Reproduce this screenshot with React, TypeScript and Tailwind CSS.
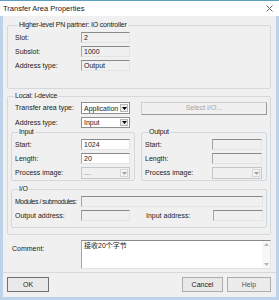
import React from 'react'

const fieldBase =
  'h-[11px] border border-t-[#8a8a8a] border-l-[#a5a5a5] border-r-[#e4e4e4] border-b-[#e4e4e4] pl-[2px] leading-[9px] whitespace-nowrap overflow-hidden'

function Field({ value, white, className = '' }: { value?: string; white?: boolean; className?: string }) {
  return <div className={`${fieldBase} ${white ? 'bg-white' : 'bg-[#f0f0f0]'} ${className}`}>{value}</div>
}

function Arrow({ dim }: { dim?: boolean }) {
  return (
    <svg width="5" height="3" viewBox="0 0 5 3">
      <path d="M0 0h5L2.5 3z" fill={dim ? '#a0a0a0' : '#000'} />
    </svg>
  )
}

function Combo({ value, disabled, className = '' }: { value?: string; disabled?: boolean; className?: string }) {
  return (
    <div
      className={`flex h-full border ${
        disabled ? 'border-[#c6c6c6] bg-[#f0f0f0] text-[#a0a0a0]' : 'border-[#8f8f8f] bg-white'
      } ${className}`}
    >
      <div className="flex-1 pl-[2px] leading-[9px] whitespace-nowrap overflow-hidden flex items-center">{value}</div>
      <div
        className={`w-[8px] m-[1px] flex items-center justify-center border ${
          disabled ? 'border-[#d6d6d6] bg-[#f4f4f4]' : 'border-[#b8b8b8] bg-[#ececec]'
        }`}
      >
        <Arrow dim={disabled} />
      </div>
    </div>
  )
}

function Group({ title, className = '', children }: { title: string; className?: string; children: React.ReactNode }) {
  return (
    <fieldset className={`border border-[#d2d8dc] rounded-[2px] ${className}`}>
      <legend className="ml-[3px] px-[1px] leading-[8px] whitespace-nowrap tracking-[-0.2px]">{title}</legend>
      {children}
    </fieldset>
  )
}

export default function App() {
  return (
    <div className="w-[279px] h-[300px] flex flex-col border-t border-t-[#5d9fc2] bg-white text-[7px] leading-[8px] text-[#222] whitespace-nowrap font-['Liberation_Sans',Arial,sans-serif] overflow-hidden">
      <div className="h-[15px] shrink-0 flex items-center justify-between pl-[3px] pr-[6px]">
        <span className="text-[7.5px] text-[#1a1a1a]">Transfer Area Properties</span>
        <svg width="7" height="7" viewBox="0 0 7 7">
          <path d="M0.5 0.5l6 6M6.5 0.5l-6 6" stroke="#666" strokeWidth="1" />
        </svg>
      </div>

      <div className="flex-1 flex flex-col bg-[#f0f0f0] border-x-[3px] border-b-[3px] border-[#bcd3ea] pl-[4px] pr-[5px]">
        <Group title="Higher-level PN partner: IO controller" className="mt-[5px] pt-[3px] pl-[7px] pb-[17px]">
          <div className="flex flex-col gap-[3px]">
            <div className="flex items-center h-[11px]">
              <span className="w-[66px]">Slot:</span>
              <Field value="2" className="w-[49px]" />
            </div>
            <div className="flex items-center h-[11px]">
              <span className="w-[66px]">Subslot:</span>
              <Field value="1000" className="w-[49px]" />
            </div>
            <div className="flex items-center h-[11px]">
              <span className="w-[66px]">Address type:</span>
              <Field value="Output" className="w-[49px]" />
            </div>
          </div>
        </Group>

        <Group title="Local: I-device" className="mt-[3px] pt-[2px] px-[3px] pb-[6px]">
          <div className="flex flex-col gap-[3px] pl-[4px]">
            <div className="flex items-center h-[12px]">
              <span className="w-[66px]">Transfer area type:</span>
              <Combo value="Application" className="w-[49px]" />
              <div className="ml-[11px] w-[126px] h-[13px] flex items-center justify-center border border-[#cfcfcf] border-r-[#9a9a9a] border-b-[#9a9a9a] text-[#a3a3a3]">
                Select I/O...
              </div>
            </div>
            <div className="flex items-center h-[11px]">
              <span className="w-[66px]">Address type:</span>
              <Combo value="Input" className="w-[49px]" />
            </div>
          </div>

          <div className="grid grid-cols-[124px_126px] gap-[6px]">
            <Group title="Input" className="pt-[3px] px-[3px] pb-[1px]">
              <div className="flex flex-col gap-[3px]">
                <div className="flex items-center h-[11px]">
                  <span className="w-[66px]">Start:</span>
                  <Field value="1024" white className="w-[49px]" />
                </div>
                <div className="flex items-center h-[11px]">
                  <span className="w-[66px]">Length:</span>
                  <Field value="20" white className="w-[49px]" />
                </div>
                <div className="flex items-center h-[12px]">
                  <span className="w-[66px]">Process image:</span>
                  <Combo value="---" disabled className="w-[49px]" />
                </div>
              </div>
            </Group>
            <Group title="Output" className="pt-[3px] px-[3px] pb-[1px]">
              <div className="flex flex-col gap-[3px]">
                <div className="flex items-center h-[11px]">
                  <span className="w-[67px]">Start:</span>
                  <Field className="w-[50px]" />
                </div>
                <div className="flex items-center h-[11px]">
                  <span className="w-[67px]">Length:</span>
                  <Field className="w-[50px]" />
                </div>
                <div className="flex items-center h-[12px]">
                  <span className="w-[67px]">Process image:</span>
                  <Combo disabled className="w-[50px]" />
                </div>
              </div>
            </Group>
          </div>

          <Group title="I/O" className="mt-[4px] pt-[3px] pl-[3px] pr-[3px] pb-[6px]">
            <div className="flex flex-col gap-[3px]">
              <div className="flex items-center h-[11px]">
                <span className="w-[66px] shrink-0 tracking-[-0.5px]">Modules / submodules:</span>
                <Field className="flex-1" />
              </div>
              <div className="flex items-center h-[11px]">
                <span className="w-[66px]">Output address:</span>
                <Field className="w-[49px]" />
                <span className="ml-[16px] w-[67px]">Input address:</span>
                <Field className="w-[50px]" />
              </div>
            </div>
          </Group>
        </Group>

        <div className="mt-[5px] flex">
          <span className="w-[74px] pl-[5px] pt-[5px]">Comment:</span>
          <div className="w-[190px] h-[29px] flex bg-white border border-t-[#8a8a8a] border-l-[#a5a5a5] border-r-[#e4e4e4] border-b-[#e4e4e4]">
            <div className="flex-1 pl-[2px] pt-[1px] font-['Liberation_Sans','Noto_Sans_CJK_SC',sans-serif]">接收20个字节</div>
            <div className="w-[8px] flex flex-col justify-between items-center py-[2px] bg-[#f7f7f7]">
              <svg width="5" height="3" viewBox="0 0 5 3">
                <path d="M0 3L2.5 0L5 3z" fill="#b5b5b5" />
              </svg>
              <svg width="5" height="3" viewBox="0 0 5 3">
                <path d="M0 0h5L2.5 3z" fill="#b5b5b5" />
              </svg>
            </div>
          </div>
        </div>

        <div className="mt-[3px] -ml-[4px] -mr-[5px] h-[1px] bg-[#d9d9d9]" />

        <div className="mt-[4px] flex h-[15px]">
          <div className="w-[42px] flex items-center justify-center border border-[#707070] bg-[#e9e9e9]">OK</div>
          <div className="ml-auto w-[41px] flex items-center justify-center border border-[#adadad] bg-[#e9e9e9]">
            Cancel
          </div>
          <div className="ml-[4px] w-[44px] flex items-center justify-center border border-[#adadad] bg-[#ececec] text-[#555]">
            Help
          </div>
        </div>
      </div>
    </div>
  )
}
